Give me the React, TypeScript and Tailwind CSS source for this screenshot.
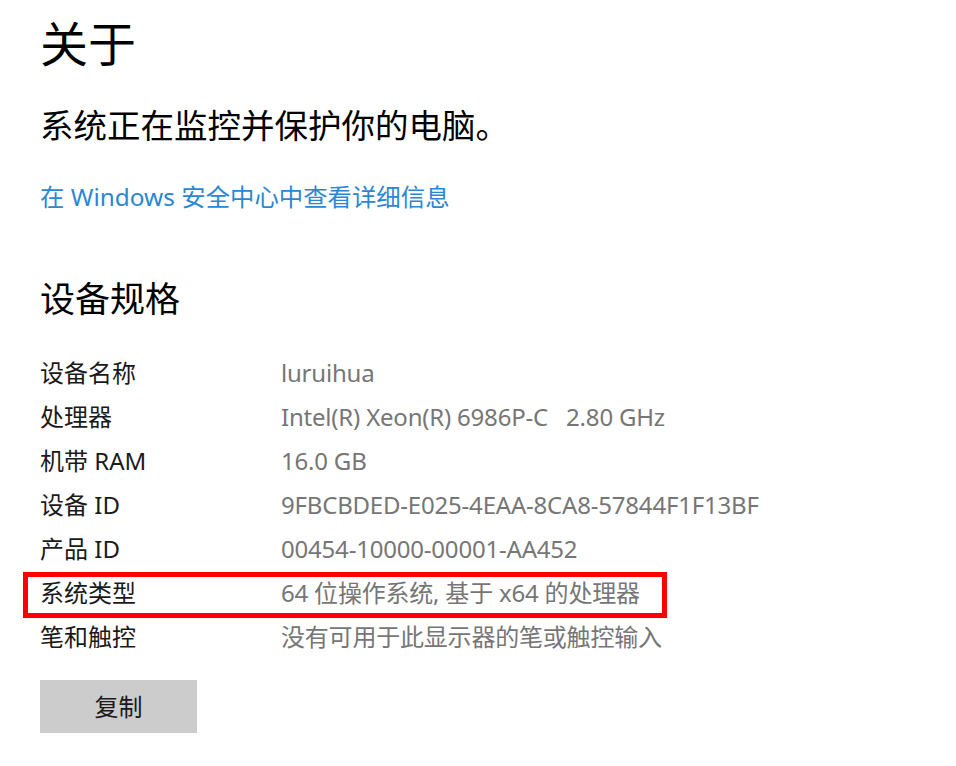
import React from 'react'

const font = { fontFamily: '"Noto Sans", "Noto Sans CJK SC", sans-serif' }

const specs = [
  { label: '设备名称', value: 'luruihua' },
  { label: '处理器', value: 'Intel(R) Xeon(R) 6986P-C   2.80 GHz' },
  { label: '机带 RAM', value: '16.0 GB' },
  { label: '设备 ID', value: '9FBCBDED-E025-4EAA-8CA8-57844F1F13BF' },
  { label: '产品 ID', value: '00454-10000-00001-AA452' },
  { label: '系统类型', value: '64 位操作系统, 基于 x64 的处理器', highlight: true },
  { label: '笔和触控', value: '没有可用于此显示器的笔或触控输入' },
]

export default function App() {
  return (
    <div className="w-[956px] h-[766px] bg-white overflow-hidden pl-[40px] text-black" style={font}>
      {/* 页头 */}
      <h1 className="text-[48px] leading-[48px] pt-[20px] font-normal">关于</h1>
      <p className="text-[33.5px] leading-[40px] mt-[37px]">系统正在监控并保护你的电脑。</p>
      <a className="block text-[24.4px] leading-[30px] mt-[37px] text-[#2b87d3]">在 Windows 安全中心中查看详细信息</a>

      {/* 设备规格 */}
      <h2 className="text-[35px] leading-[40px] mt-[67px]">设备规格</h2>
      <div className="mt-[32px] text-[24px]">
        {specs.map((s) => (
          <div key={s.label} className="relative flex items-center h-[44px]">
            <span className="w-[241px] shrink-0 text-[#1a1a1a]">{s.label}</span>
            <span className="text-[#767676] whitespace-pre tracking-[-0.2px]">{s.value}</span>
            {s.highlight && (
              <span className="absolute left-[-17px] top-[1px] w-[644px] h-[46px] border-[5px] border-[#ff0000]" />
            )}
          </div>
        ))}
      </div>

      <button className="mt-[21px] w-[157px] h-[53px] bg-[#cccccc] text-[24px] text-[#1a1a1a]">复制</button>
    </div>
  )
}
